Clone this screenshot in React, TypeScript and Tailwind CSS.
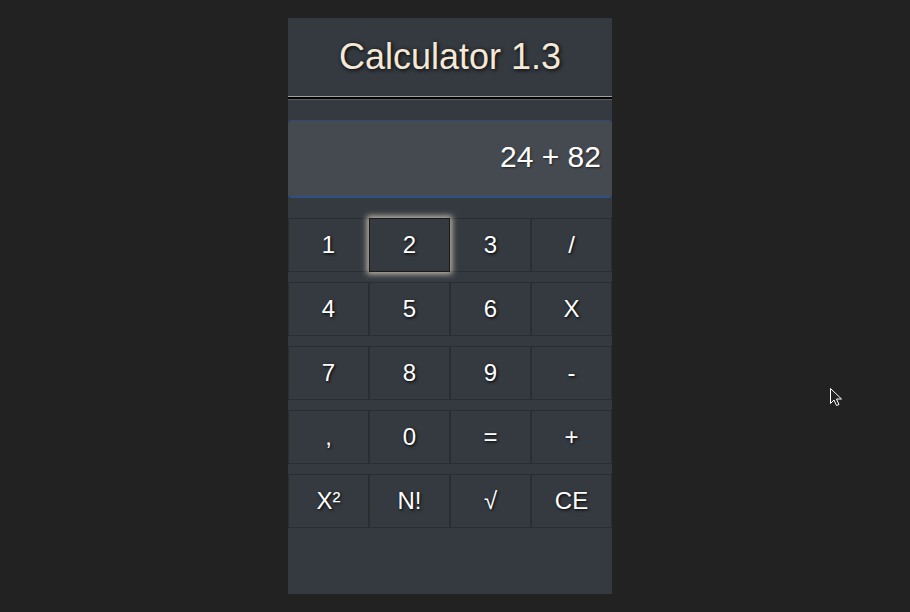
import React from "react";

const rows: string[][] = [
  ["1", "2", "3", "/"],
  ["4", "5", "6", "X"],
  ["7", "8", "9", "-"],
  [",", "0", "=", "+"],
  ["X²", "N!", "√", "CE"],
];

export default function App() {
  return (
    <div
      className="relative w-[910px] h-[612px] bg-[#222222] flex overflow-hidden"
      style={{ fontFamily: '"Liberation Sans", Arial, sans-serif' }}
    >
      <div className="ml-[288px] mt-[18px] w-[324px] h-[576px] bg-[#343a40] flex flex-col">
        <div className="h-[78px] flex items-center justify-center">
          <span className="text-[36px] text-[#f5e8d6] [text-shadow:1px_1px_4px_#000] leading-none">
            Calculator 1.3
          </span>
        </div>
        <div className="h-px bg-[#a0a0a0]" />
        <div className="h-[2px] bg-black" />
        <div className="h-px bg-[#5a5f65]" />
        <div className="mt-[20px] h-[78px] rounded-[4px] bg-[#454a51] border-t border-b-2 border-t-[#2f4b72] border-b-[#2c5189] flex items-center justify-end pr-[11px] pb-[4px]">
          <span className="text-[30px] text-white [text-shadow:1px_1px_2px_#222] leading-none">24 + 82</span>
        </div>
        <div className="mt-[20px] flex flex-col gap-[10px]">
          {rows.map((row, i) => (
            <div key={i} className="flex">
              {row.map((k) => {
                const focused = k === "2";
                return (
                  <div
                    key={k}
                    className={
                      focused
                        ? "w-[81px] h-[54px] flex items-center justify-center border border-[#1a1a1a] bg-[#343a40] shadow-[0_0_6px_2px_rgba(245,232,210,0.75)] relative z-10"
                        : "w-[81px] h-[54px] flex items-center justify-center border border-[#2a2e33] bg-[#343a40]"
                    }
                  >
                    <span className="text-[24px] text-white [text-shadow:1px_1px_3px_#000] leading-none">
                      {k}
                    </span>
                  </div>
                );
              })}
            </div>
          ))}
        </div>
      </div>
      <svg
        className="absolute left-[830px] top-[388px]"
        width="14"
        height="20"
        viewBox="0 0 14 20"
      >
        <path
          d="M0.5 0.5 L0.5 15.5 L4 12 L6.5 17.5 L9 16.5 L6.5 11 L11.5 11 Z"
          fill="#222"
          stroke="#fff"
          strokeWidth="1"
        />
      </svg>
    </div>
  );
}
